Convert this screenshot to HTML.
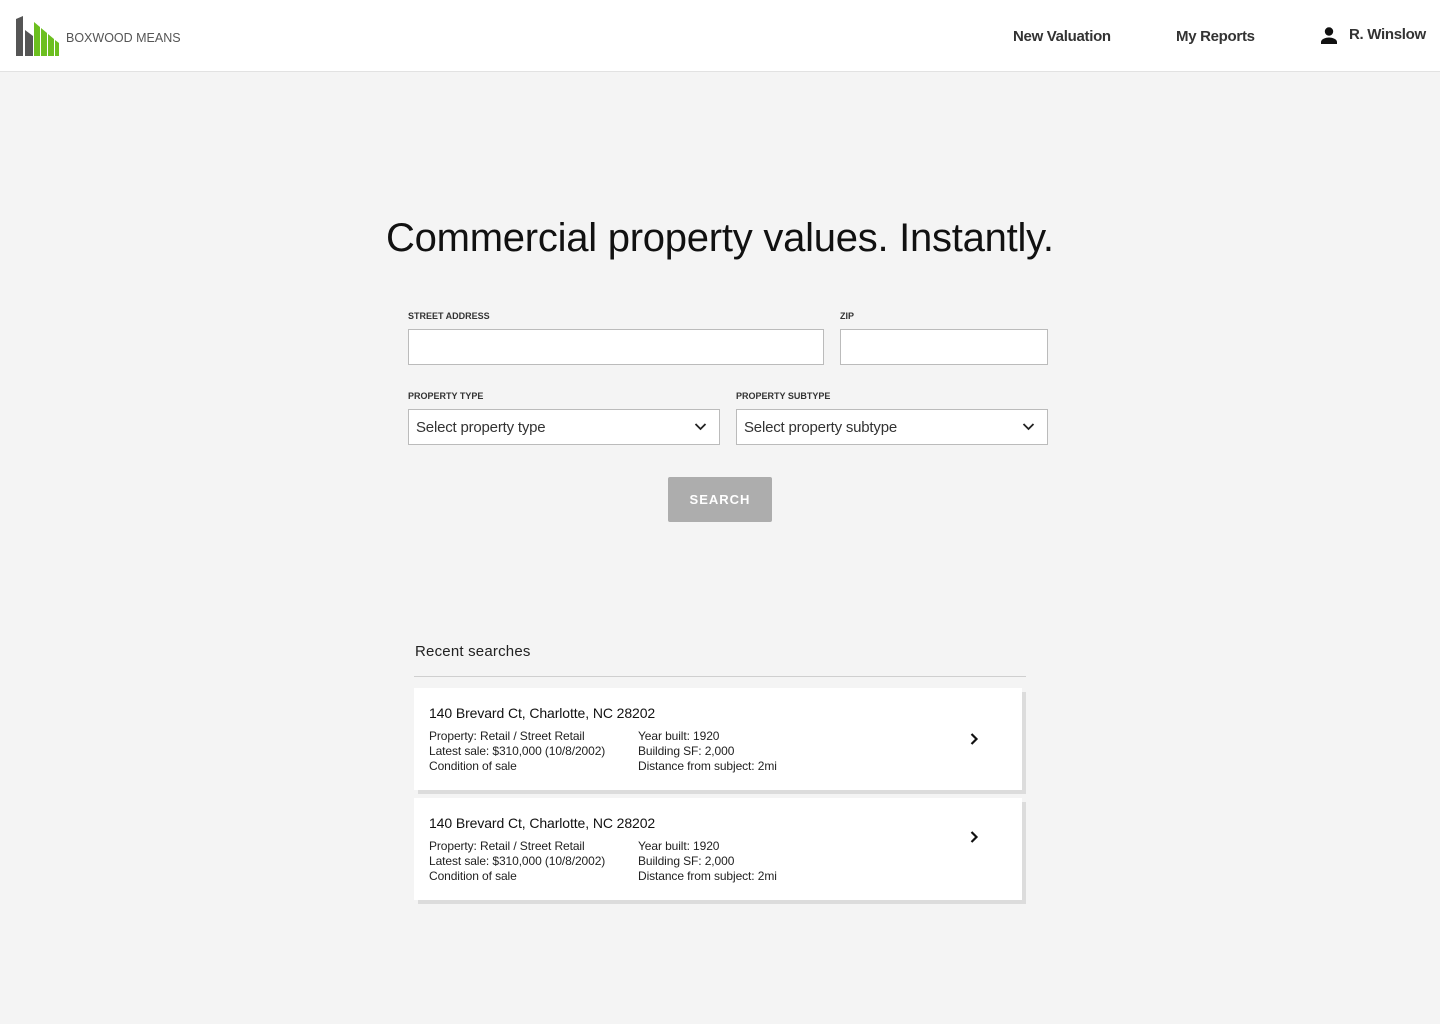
<!DOCTYPE html>
<html><head><meta charset="utf-8"><style>
*{box-sizing:border-box;margin:0;padding:0}
body{width:1440px;height:1024px;background:#f4f4f4;font-family:"Liberation Sans",sans-serif;color:#111;position:relative;overflow:hidden}
.hdr{position:absolute;left:0;top:0;width:1440px;height:72px;background:#fff;border-bottom:1px solid #e2e2e2}
.abs{position:absolute;white-space:nowrap}
.nav{font-size:15px;color:#333;font-weight:bold;letter-spacing:-0.3px}
h1{position:absolute;left:386px;top:216px;font-size:40px;font-weight:normal;letter-spacing:-0.25px;white-space:nowrap;color:#111}
.lbl{position:absolute;font-size:9px;font-weight:bold;color:#333;letter-spacing:0}
.inp{position:absolute;background:#fff;border:1px solid #bbb;height:36px}
.sel{font-size:15px;color:#333;padding:9px 7px;letter-spacing:-0.2px}
.sel svg{position:absolute;right:12px;top:12px}
.btn{position:absolute;left:668px;top:477px;width:104px;height:45px;background:#adadad;border-radius:2px;color:#fff;font-weight:bold;font-size:13px;letter-spacing:1px;text-align:center;line-height:45px}
.card{position:absolute;left:414px;width:608px;height:102px;background:#fff;box-shadow:4px 4px 0 #dcdcdc}
.card .t{position:absolute;left:15px;top:17px;font-size:14px;letter-spacing:-0.1px;color:#111}
.card .c{position:absolute;top:41px;font-size:12px;line-height:15px;color:#222;letter-spacing:-0.1px}
.card svg{position:absolute;left:555px}
</style></head><body>
<div class="hdr">
<svg class="abs" style="left:14px;top:14px" width="48" height="44" viewBox="14 14 48 44">
<polygon points="16,19 23,16 23,56 16,56" fill="#555"/>
<polygon points="25,30 33,36 33,56 25,56" fill="#555"/>
<polygon points="34,22 40,27 40,56 34,56" fill="#6cbf1f"/>
<polygon points="41,28 47,33 47,56 41,56" fill="#6cbf1f"/>
<polygon points="48,34 54,39 54,56 48,56" fill="#6cbf1f"/>
<polygon points="55,40 59,43 59,56 55,56" fill="#6cbf1f"/>
</svg>
<div class="abs" style="left:66px;top:31px;font-size:12.5px;color:#555;letter-spacing:0">BOXWOOD MEANS</div>
<div class="abs nav" style="left:1013px;top:28px">New Valuation</div>
<div class="abs nav" style="left:1176px;top:28px">My Reports</div>
<svg class="abs" style="left:1320px;top:27px" width="18" height="17" viewBox="0 0 18 17"><circle cx="9" cy="4.5" r="4.2" fill="#111"/><path d="M1 17v-2c0-3 5-4.5 8-4.5s8 1.5 8 4.5v2z" fill="#111"/></svg>
<div class="abs nav" style="left:1349px;top:26px">R. Winslow</div>
</div>
<h1>Commercial property values. Instantly.</h1>
<div class="lbl" style="left:408px;top:311px">STREET ADDRESS</div>
<div class="lbl" style="left:840px;top:311px">ZIP</div>
<div class="inp" style="left:408px;top:329px;width:416px"></div>
<div class="inp" style="left:840px;top:329px;width:208px"></div>
<div class="lbl" style="left:408px;top:391px">PROPERTY TYPE</div>
<div class="lbl" style="left:736px;top:391px">PROPERTY SUBTYPE</div>
<div class="inp sel" style="left:408px;top:409px;width:312px">Select property type<svg width="13" height="9" viewBox="0 0 13 9"><path d="M1.5 2l5 5 5-5" stroke="#222" stroke-width="1.8" fill="none"/></svg></div>
<div class="inp sel" style="left:736px;top:409px;width:312px">Select property subtype<svg width="13" height="9" viewBox="0 0 13 9"><path d="M1.5 2l5 5 5-5" stroke="#222" stroke-width="1.8" fill="none"/></svg></div>
<div class="btn">SEARCH</div>
<div class="abs" style="left:415px;top:643px;font-size:15px;color:#222;letter-spacing:0.2px">Recent searches</div>
<div class="abs" style="left:414px;top:676px;width:612px;height:1px;background:#cfcfcf"></div>
<div class="card" style="top:688px">
<div class="t">140 Brevard Ct, Charlotte, NC 28202</div>
<div class="c" style="left:15px">Property: Retail / Street Retail<br>Latest sale: $310,000 (10/8/2002)<br>Condition of sale</div>
<div class="c" style="left:224px">Year built: 1920<br>Building SF: 2,000<br>Distance from subject: 2mi</div>
<svg style="top:44px" width="10" height="14" viewBox="0 0 10 14"><path d="M2.5 2l5 5-5 5" stroke="#111" stroke-width="2.2" fill="none"/></svg>
</div>
<div class="card" style="top:798px">
<div class="t">140 Brevard Ct, Charlotte, NC 28202</div>
<div class="c" style="left:15px">Property: Retail / Street Retail<br>Latest sale: $310,000 (10/8/2002)<br>Condition of sale</div>
<div class="c" style="left:224px">Year built: 1920<br>Building SF: 2,000<br>Distance from subject: 2mi</div>
<svg style="top:32px" width="10" height="14" viewBox="0 0 10 14"><path d="M2.5 2l5 5-5 5" stroke="#111" stroke-width="2.2" fill="none"/></svg>
</div>
</body></html>
